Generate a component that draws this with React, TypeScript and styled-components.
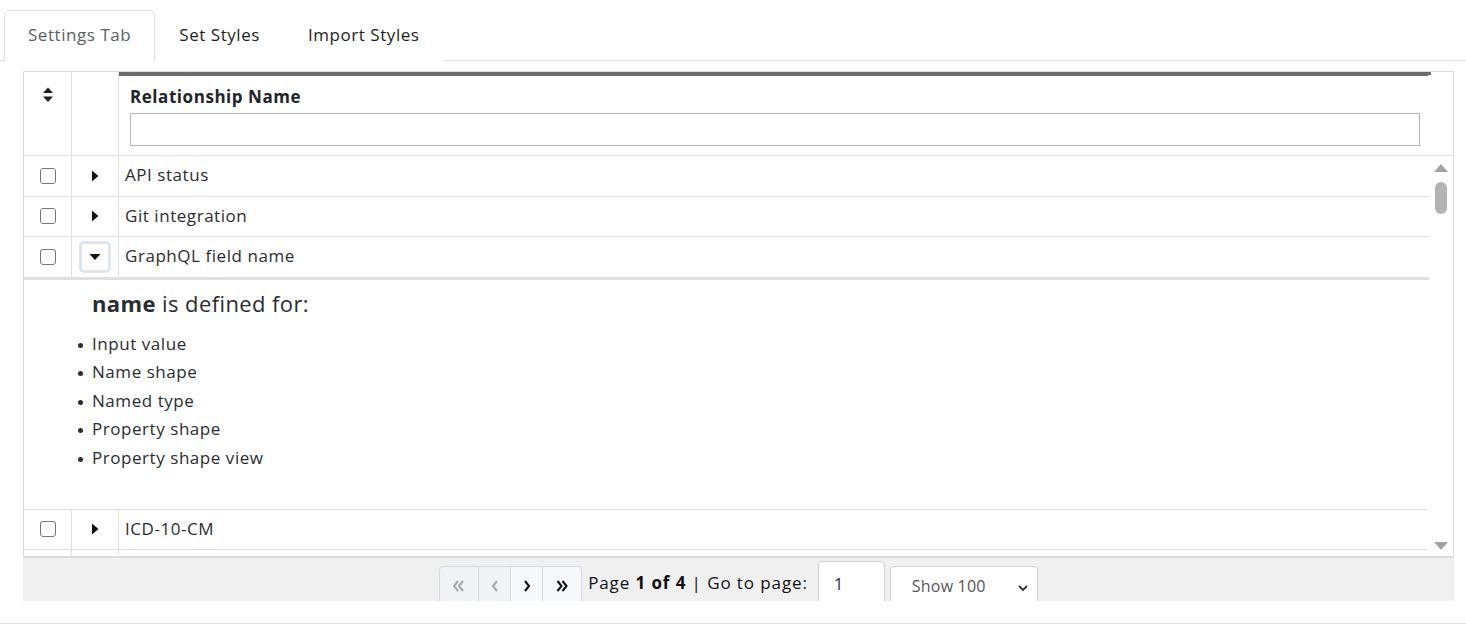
import styled, { createGlobalStyle } from "styled-components";

const GlobalStyle = createGlobalStyle`
  body {
    margin: 0;
    background: #fff;
    font-family: "Open Sans", "Noto Sans", sans-serif;
    color: #212529;
    letter-spacing: 0.55px;
  }
  * { box-sizing: border-box; }
`;

// 整頁
const Page = styled.div`
  width: 1466px;
  height: 627px;
  padding-top: 10px;
  overflow: hidden;
`;

// 分頁標籤列
const TabBar = styled.div`
  display: flex;
  padding-left: 4px;
  border-bottom: 1px solid #dee2e6;
  height: 51px;
`;

const Tab = styled.div<{ $active?: boolean }>`
  display: flex;
  align-items: center;
  padding: 0 23px 4px;
  font-size: 17px;
  color: ${(p) => (p.$active ? "#5a5f63" : "#1d1f21")};
  border: 1px solid ${(p) => (p.$active ? "#dee2e6" : "transparent")};
  border-bottom: ${(p) => (p.$active ? "1px solid #fff" : "none")};
  border-radius: 5px 5px 0 0;
  background: #fff;
  margin-bottom: -1px;
  height: 52px;
`;

const TabPanel = styled.div`
  padding: 10px 12px 0 23px;
  border-bottom: 1px solid #dee2e6;
  height: 563px;
`;

// 表格外框
const TableBox = styled.div`
  border: 1px solid #dcdcdc;
  border-bottom: none;
  width: 1431px;
`;

const HeadRow = styled.div`
  display: flex;
  height: 84px;
  border-bottom: 1px solid #e0e0e0;
`;

const Cell = styled.div<{ $w?: number }>`
  width: ${(p) => (p.$w ? `${p.$w}px` : "auto")};
  flex: ${(p) => (p.$w ? "none" : "1")};
  display: flex;
  align-items: center;
  justify-content: center;
  border-right: 1px solid #e0e0e0;
`;

const SortCell = styled(Cell)`
  align-items: flex-start;
  padding-top: 14px;
`;

const NameHead = styled.div`
  width: 1312px;
  border-top: 4px solid #6b6b6b;
  padding: 10px 11px 0 11px;
  position: relative;
  &::after {
    content: "";
    position: absolute;
    right: 0;
    top: -1px;
    width: 3px;
    height: 3px;
    background: #fff;
  }
`;

const HeadTitle = styled.div`
  font-weight: 700;
  font-size: 17px;
  line-height: 22px;
  margin-bottom: 5px;
`;

const FilterInput = styled.input`
  width: 100%;
  height: 33px;
  border: 1px solid #b5b5b5;
  outline: none;
`;

const ScrollGap = styled.div`
  flex: 1;
`;

const BodyWrap = styled.div`
  display: flex;
  height: 400px;
  overflow: hidden;
`;

const Rows = styled.div`
  width: 1406px;
`;

const Row = styled.div`
  display: flex;
  height: 40.5px;
  border-bottom: 1px solid #e0e0e0;
`;

const TextCell = styled.div`
  flex: 1;
  display: flex;
  align-items: center;
  padding: 0 0 2px 6px;
  font-size: 17px;
  color: #2a2d30;
`;

const Check = styled.span`
  width: 16px;
  height: 16px;
  border: 1px solid #767676;
  border-radius: 3px;
  background: #fff;
`;

const CaretBtn = styled.span<{ $open?: boolean }>`
  width: 32px;
  height: 32px;
  display: flex;
  align-items: center;
  justify-content: center;
  border-radius: 5px;
  border: 3px solid ${(p) => (p.$open ? "#dde6ef" : "transparent")};
  color: #111;
`;

const Detail = styled.div`
  height: 232px;
  border-top: 2px solid #e0e0e0;
  border-bottom: 1px solid #e0e0e0;
  padding: 8px 0 0 68px;
`;

const DetailTitle = styled.div`
  font-size: 22px;
  line-height: 30px;
  color: #2a2d30;
  margin-bottom: 12px;
  letter-spacing: 0.4px;
  b { font-weight: 700; }
`;

const DetailList = styled.ul`
  margin: 0;
  padding-left: 0;
  list-style: none;
`;

const DetailItem = styled.li`
  font-size: 17px;
  line-height: 28.5px;
  color: #2a2d30;
  position: relative;
  &::before {
    content: "";
    position: absolute;
    left: -14px;
    top: 13px;
    width: 5px;
    height: 5px;
    border-radius: 50%;
    background: #2a2d30;
  }
`;

const Scrollbar = styled.div`
  width: 24px;
  display: flex;
  flex-direction: column;
  align-items: center;
  padding: 8px 0 6px;
`;

const Thumb = styled.div`
  width: 12px;
  height: 32px;
  border-radius: 6px;
  background: #b3b3b3;
  margin-top: 10px;
`;

const Arrow = styled.div<{ $down?: boolean }>`
  width: 0;
  height: 0;
  border-left: 7px solid transparent;
  border-right: 7px solid transparent;
  ${(p) => (p.$down ? "border-top: 8px solid #a3a3a3;" : "border-bottom: 8px solid #a3a3a3;")}
  margin-top: ${(p) => (p.$down ? "auto" : "0")};
`;

// 分頁控制
const Footer = styled.div`
  height: 45px;
  width: 1431px;
  background: #f0f0f0;
  border-top: 2px solid #dcdcdc;
  display: flex;
  justify-content: center;
  align-items: flex-start;
  overflow: hidden;
`;

const BtnGroup = styled.div`
  display: flex;
  margin-top: 8px;
`;

const PageBtn = styled.div<{ $w: number; $disabled?: boolean }>`
  width: ${(p) => p.$w}px;
  height: 40px;
  display: flex;
  align-items: center;
  justify-content: center;
  background: ${(p) => (p.$disabled ? "#f1f2f6" : "#f7f8fb")};
  border: 1px solid #d4dae4;
  margin-left: -1px;
  color: ${(p) => (p.$disabled ? "#a6a9b0" : "#111")};
  &:first-child {
    border-radius: 4px 0 0 4px;
    margin-left: 0;
  }
  &:last-child {
    border-radius: 0 4px 4px 0;
  }
`;

const PageInfo = styled.div`
  font-size: 17px;
  margin: 14px 0 0 6px;
  line-height: 22px;
  letter-spacing: 0.9px;
  color: #111;
  b { font-weight: 700; }
`;

const GotoInput = styled.div`
  width: 67px;
  height: 44px;
  margin: 3px 0 0 10px;
  background: #fff;
  border: 1px solid #d0d0d0;
  border-radius: 4px;
  font-size: 17px;
  padding: 10px 0 0 15px;
  color: #333;
`;

const ShowSelect = styled.div`
  width: 148px;
  height: 40px;
  margin: 8px 0 0 5px;
  background: #fff;
  border: 1px solid #d0d0d0;
  border-radius: 4px;
  display: flex;
  align-items: flex-start;
  justify-content: space-between;
  padding: 8px 8px 0 21px;
  font-size: 16px;
  letter-spacing: 0.2px;
  color: #555;
`;

const Chevron = ({ dir, double }: { dir: "l" | "r" | "d"; double?: boolean }) => {
  const single = (x: number) =>
    dir === "l" ? `M${x + 4} 3 L${x} 8 L${x + 4} 13` : `M${x} 3 L${x + 4} 8 L${x} 13`;
  if (dir === "d") {
    return (
      <svg width="12" height="12" viewBox="0 0 12 12" style={{ marginTop: 7 }}>
        <path d="M2 4 L6 8 L10 4" fill="none" stroke="#333" strokeWidth="1.8" />
      </svg>
    );
  }
  return (
    <svg width="16" height="16" viewBox="0 0 16 16">
      {double ? (
        <>
          <path d={single(dir === "l" ? 3 : 3.5)} fill="none" stroke="currentColor" strokeWidth="2.1" />
          <path d={single(dir === "l" ? 8 : 8.5)} fill="none" stroke="currentColor" strokeWidth="2.1" />
        </>
      ) : (
        <path d={single(6)} fill="none" stroke="currentColor" strokeWidth="2.1" />
      )}
    </svg>
  );
};

const Tri = ({ down }: { down?: boolean }) => (
  <svg width="14" height="14" viewBox="0 0 14 14">
    {down ? <path d="M1.5 4 H12.5 L7 10 Z" fill="#111" /> : <path d="M4 1.5 V12.5 L10.5 7 Z" fill="#111" />}
  </svg>
);

const SortIcon = () => (
  <svg width="12" height="18" viewBox="0 0 12 18">
    <path d="M1 7 L6 1.5 L11 7 Z" fill="#222" />
    <path d="M1 10.5 L6 16 L11 10.5 Z" fill="#222" />
  </svg>
);

const rowsTop = ["API status", "Git integration"];
const items = ["Input value", "Name shape", "Named type", "Property shape", "Property shape view"];

function DataRow({ label, open }: { label: string; open?: boolean }) {
  return (
    <Row>
      <Cell $w={48}>
        <Check />
      </Cell>
      <Cell $w={47}>
        <CaretBtn $open={open}>
          <Tri down={open} />
        </CaretBtn>
      </Cell>
      <TextCell>{label}</TextCell>
    </Row>
  );
}

export default function App() {
  return (
    <Page>
      <GlobalStyle />
      <TabBar>
        <Tab $active>Settings Tab</Tab>
        <Tab>Set Styles</Tab>
        <Tab>Import Styles</Tab>
      </TabBar>
      <TabPanel>
        <TableBox>
          <HeadRow>
            <SortCell $w={48}>
              <SortIcon />
            </SortCell>
            <Cell $w={47} />
            <NameHead>
              <HeadTitle>Relationship Name</HeadTitle>
              <FilterInput />
            </NameHead>
            <ScrollGap />
          </HeadRow>
          <BodyWrap>
            <Rows>
              {rowsTop.map((r) => (
                <DataRow key={r} label={r} />
              ))}
              <DataRow label="GraphQL field name" open />
              <Detail>
                <DetailTitle>
                  <b>name</b> is defined for:
                </DetailTitle>
                <DetailList>
                  {items.map((i) => (
                    <DetailItem key={i}>{i}</DetailItem>
                  ))}
                </DetailList>
              </Detail>
              <DataRow label="ICD-10-CM" />
              <DataRow label="" />
            </Rows>
            <Scrollbar>
              <Arrow />
              <Thumb />
              <Arrow $down />
            </Scrollbar>
          </BodyWrap>
        </TableBox>
        <Footer>
          <BtnGroup>
            <PageBtn $w={40} $disabled>
              <Chevron dir="l" double />
            </PageBtn>
            <PageBtn $w={33} $disabled>
              <Chevron dir="l" />
            </PageBtn>
            <PageBtn $w={33}>
              <Chevron dir="r" />
            </PageBtn>
            <PageBtn $w={40}>
              <Chevron dir="r" double />
            </PageBtn>
          </BtnGroup>
          <PageInfo>
            Page <b>1 of 4</b> | Go to page:
          </PageInfo>
          <GotoInput>1</GotoInput>
          <ShowSelect>
            Show 100
            <Chevron dir="d" />
          </ShowSelect>
        </Footer>
      </TabPanel>
    </Page>
  );
}
